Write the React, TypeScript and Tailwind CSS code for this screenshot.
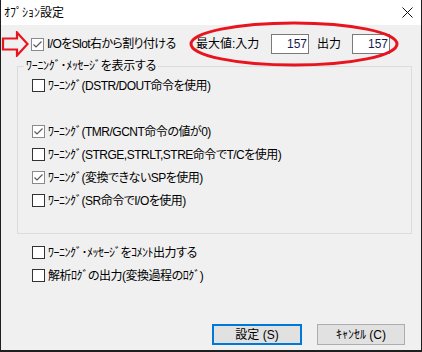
import React from 'react';

const font = "font-['Liberation_Sans','Noto_Sans_CJK_JP',sans-serif] [font-feature-settings:'palt']";

// 半角カナだけはpaltを切る（幅が詰まりすぎるので）
function T({ text }: { text: string }) {
  const parts = text.split(/([\uFF61-\uFF9F]+)/);
  return (
    <>
      {parts.map((p, i) =>
        /[\uFF61-\uFF9F]/.test(p) ? (
          <span key={i} className="[font-feature-settings:normal]">
            {p}
          </span>
        ) : (
          <React.Fragment key={i}>{p}</React.Fragment>
        )
      )}
    </>
  );
}

function Box({ checked }: { checked?: boolean }) {
  return (
    <span
      className={
        'w-[13px] h-[13px] shrink-0 bg-white border flex items-center justify-center ' +
        (checked ? 'border-[#8a8a8a]' : 'border-[#333333]')
      }
    >
      {checked && (
        <svg width="11" height="11" viewBox="0 0 11 11">
          <polyline points="1.5,5.5 4,8 9.5,2.5" fill="none" stroke="#5a5a5a" strokeWidth="1.2" />
        </svg>
      )}
    </span>
  );
}

function Row({ label, checked }: { label: string; checked?: boolean }) {
  return (
    <div className="h-[23px] flex items-center gap-[3px]">
      <Box checked={checked} />
      <span className="text-[12px] leading-none tracking-[-0.5px] text-black whitespace-nowrap">
        <T text={label} />
      </span>
    </div>
  );
}

function App() {
  return (
    <div className={'w-[422px] h-[352px] bg-[#1f1f1f] pl-px ' + font}>
      <div className="w-[420px] h-[350px] bg-[#f0f0f0] flex flex-col relative">
        {/* タイトルバー */}
        <div className="h-[25px] bg-white flex items-center justify-between pl-[3px] pr-[8px]">
          <span className="text-[12px] leading-none text-black">
            <T text="ｵﾌﾟｼｮﾝ設定" />
          </span>
          <svg width="11" height="11" viewBox="0 0 11 11">
            <path d="M0.5 0.5 L10.5 10.5 M10.5 0.5 L0.5 10.5" stroke="#111" strokeWidth="1" />
          </svg>
        </div>

        {/* 1行目 */}
        <div className="mt-[9px] h-[20px] flex items-center text-[12px] leading-none text-black">
          <div className="w-[195px] flex items-center">
            <svg width="28" height="26" viewBox="0 0 28 26" className="shrink-0">
              <path
                d="M2 7.5 H16 V1.5 L26.5 13 L16 24.5 V18.5 H2 Z"
                fill="none"
                stroke="#e8141e"
                strokeWidth="2.2"
                strokeLinejoin="miter"
              />
            </svg>
            <span className="ml-[2px]">
              <Box checked />
            </span>
            <span className="ml-[3px] whitespace-nowrap tracking-[-0.6px]">I/OをSlot右から割り付ける</span>
          </div>
          <span className="w-[75px] whitespace-nowrap">最大値:入力</span>
          <div className="w-[38px] h-[20px] bg-white border border-[#7a7a7a] flex items-center justify-end pr-[1px] text-[#1a1a50]">
            157
          </div>
          <span className="ml-[8px] w-[35px]">出力</span>
          <div className="w-[38px] h-[20px] bg-white border border-[#7a7a7a] flex items-center justify-end pr-[1px] text-[#1a1a50]">
            157
          </div>
        </div>

        {/* グループボックス */}
        <div className="mt-[12px] ml-[16px] w-[395px] h-[168px] border border-[#dcdcdc] relative pt-[7px] pl-[14px]">
          <span className="absolute -top-[7px] left-[6px] px-[2px] bg-[#f0f0f0] text-[12px] leading-none tracking-[-0.3px] text-black whitespace-nowrap">
            <T text="ﾜｰﾆﾝｸﾞ･ﾒｯｾｰｼﾞを表示する" />
          </span>
          <Row label="ﾜｰﾆﾝｸﾞ(DSTR/DOUT命令を使用)" />
          <div className="h-[23px]" />
          <Row label="ﾜｰﾆﾝｸﾞ(TMR/GCNT命令の値が0)" checked />
          <Row label="ﾜｰﾆﾝｸﾞ(STRGE,STRLT,STRE命令でT/Cを使用)" />
          <Row label="ﾜｰﾆﾝｸﾞ(変換できないSPを使用)" checked />
          <Row label="ﾜｰﾆﾝｸﾞ(SR命令でI/Oを使用)" />
        </div>

        <div className="mt-[7px] pl-[31px]">
          <Row label="ﾜｰﾆﾝｸﾞ･ﾒｯｾｰｼﾞをｺﾒﾝﾄ出力する" />
          <Row label="解析ﾛｸﾞの出力(変換過程のﾛｸﾞ)" />
        </div>

        {/* ボタン */}
        <div className="mt-[37px] flex justify-end gap-[15px] pr-[16px]">
          <button className="w-[90px] h-[21px] bg-[#e1e1e1] border-2 border-[#0078d7] text-[12px] leading-none text-black">
            設定 (S)
          </button>
          <button className="w-[88px] h-[21px] bg-[#e1e1e1] border border-[#adadad] text-[12px] leading-none text-black">
            <T text="ｷｬﾝｾﾙ (C)" />
          </button>
        </div>

        {/* 赤い楕円 */}
        <svg width="212" height="48" viewBox="0 0 212 48" className="absolute left-[187px] top-[20px] pointer-events-none">
          <ellipse cx="106" cy="24" rx="103" ry="21" fill="none" stroke="#e8141e" strokeWidth="3" />
        </svg>
      </div>
    </div>
  );
}

export default App;
